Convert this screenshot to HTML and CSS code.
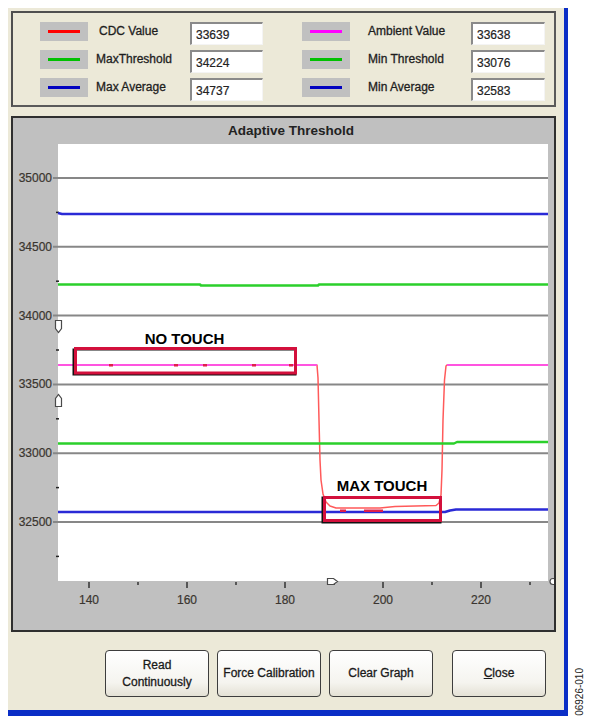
FILE: index.html
```html
<!DOCTYPE html>
<html lang="en">
<head>
<meta charset="utf-8">
<title>Adaptive Threshold</title>
<link rel="stylesheet" href="styles.css">
</head>
<body>
<div class="page">
  <div class="window">
    <section class="legend">
      <div class="legend-col legend-col--left">
        <span class="swatch"><i class="swatch-line red"></i></span><span class="lbl lbl--indent">CDC Value</span><span class="field">33639</span>
        <span class="swatch"><i class="swatch-line green"></i></span><span class="lbl">MaxThreshold</span><span class="field">34224</span>
        <span class="swatch"><i class="swatch-line blue"></i></span><span class="lbl">Max Average</span><span class="field">34737</span>
      </div>
      <div class="legend-col legend-col--right">
        <span class="swatch"><i class="swatch-line magenta"></i></span><span class="lbl">Ambient Value</span><span class="field">33638</span>
        <span class="swatch"><i class="swatch-line green"></i></span><span class="lbl">Min Threshold</span><span class="field">33076</span>
        <span class="swatch"><i class="swatch-line blue"></i></span><span class="lbl">Min Average</span><span class="field">32583</span>
      </div>
    </section>

    <section class="graph">
      <div class="graph-title">Adaptive Threshold</div>
      <svg class="plot" width="541" height="486" viewBox="13 144 541 486">
        <rect x="58" y="144" width="490" height="437" fill="#fff"/>

        <!-- horizontal grid, one line per 500 counts -->
        <g stroke="#878787" stroke-width="2">
          <line x1="53" y1="178" x2="548" y2="178"/>
          <line x1="53" y1="246.8" x2="548" y2="246.8"/>
          <line x1="53" y1="315.6" x2="548" y2="315.6"/>
          <line x1="53" y1="384.4" x2="548" y2="384.4"/>
          <line x1="53" y1="453.2" x2="548" y2="453.2"/>
          <line x1="53" y1="522" x2="548" y2="522"/>
        </g>
        <g stroke="#222" stroke-width="1.5">
          <line x1="56" y1="212.4" x2="59" y2="212.4"/>
          <line x1="56" y1="281.2" x2="59" y2="281.2"/>
          <line x1="56" y1="350" x2="59" y2="350"/>
          <line x1="56" y1="418.8" x2="59" y2="418.8"/>
          <line x1="56" y1="487.6" x2="59" y2="487.6"/>
          <line x1="56" y1="556.4" x2="59" y2="556.4"/>
        </g>
        <g class="axis-text" text-anchor="end">
          <text x="52" y="182">35000</text>
          <text x="52" y="251">34500</text>
          <text x="52" y="320">34000</text>
          <text x="52" y="388">33500</text>
          <text x="52" y="457">33000</text>
          <text x="52" y="526">32500</text>
        </g>

        <!-- x axis ticks and labels -->
        <g stroke="#333" stroke-width="1.5">
          <line x1="89" y1="582" x2="89" y2="588"/>
          <line x1="187" y1="582" x2="187" y2="588"/>
          <line x1="285" y1="582" x2="285" y2="588"/>
          <line x1="383" y1="582" x2="383" y2="588"/>
          <line x1="481" y1="582" x2="481" y2="588"/>
          <line x1="138" y1="582" x2="138" y2="585"/>
          <line x1="236" y1="582" x2="236" y2="585"/>
          <line x1="334" y1="582" x2="334" y2="585"/>
          <line x1="432" y1="582" x2="432" y2="585"/>
          <line x1="530" y1="582" x2="530" y2="585"/>
        </g>
        <g class="axis-text" text-anchor="middle">
          <text x="89" y="604">140</text>
          <text x="187" y="604">160</text>
          <text x="285" y="604">180</text>
          <text x="383" y="604">200</text>
          <text x="481" y="604">220</text>
        </g>

        <!-- traces -->
        <g fill="none" stroke-linejoin="round">
          <polyline stroke="#2a2ad6" stroke-width="2.5" points="58,213 62,214 548,214"/>
          <polyline stroke="#2bd02b" stroke-width="2.5" points="58,284.5 200,284.5 201,285.5 318,285.5 319,284.5 548,284.5"/>
          <polyline stroke="#ff5a5a" stroke-width="1.5" points="58,365 317,365 318,378 319,420 320,460 321,480 323,494 326,502 330,506 336,508 380,508 395,506.5 436,505.5 439,503 441,495 442,470 443,420 444.5,380 446,366 447,365 548,365"/>
          <polyline stroke="#ff44ff" stroke-width="1.5" points="58,365 317,365"/>
          <polyline stroke="#ff44ff" stroke-width="1.5" points="447,365 548,365"/>
          <polyline stroke="#2bd02b" stroke-width="2.5" points="58,443.5 454,443.5 457,442 548,442"/>
          <polyline stroke="#2a2ad6" stroke-width="2.5" points="58,512 445,512 450,510.5 456,509.5 548,509.5"/>
        </g>
        <g fill="#e0204a">
          <rect x="109" y="364" width="4" height="2.5"/>
          <rect x="174" y="364" width="4" height="2.5"/>
          <rect x="203" y="364" width="4" height="2.5"/>
          <rect x="252" y="364" width="4" height="2.5"/>
          <rect x="289" y="364" width="4" height="2.5"/>
          <rect x="340" y="509.5" width="6" height="2.5"/>
          <rect x="364" y="509.5" width="19" height="2.5"/>
        </g>

        <!-- cursor handles -->
        <g fill="#fff" stroke="#4a4a4a" stroke-width="1.2">
          <path d="M55.5 320.5 h6 v8 l-3 4 l-3 -4 z"/>
          <path d="M55.5 406.5 h6 v-8 l-3 -4 l-3 4 z"/>
          <path d="M327.5 578.5 v6 h6 l4 -3 l-4 -3 z"/>
          <circle cx="553" cy="581.5" r="3"/>
        </g>

        <!-- annotations -->
        <g fill="none">
          <rect x="73.5" y="349.5" width="222" height="25" stroke="#111" stroke-width="2"/>
          <rect x="75.5" y="348.5" width="220" height="24.5" stroke="#d3103c" stroke-width="3"/>
          <rect x="322.5" y="497.5" width="118" height="25" stroke="#111" stroke-width="2"/>
          <rect x="324.5" y="497.5" width="116" height="23" stroke="#d3103c" stroke-width="3"/>
        </g>
        <g class="note-text" text-anchor="middle">
          <text x="184.5" y="344">NO TOUCH</text>
          <text x="382" y="491">MAX TOUCH</text>
        </g>
      </svg>
    </section>

    <div class="actions">
      <button class="btn" type="button">Read<br>Continuously</button>
      <button class="btn" type="button">Force Calibration</button>
      <button class="btn" type="button">Clear Graph</button>
      <button class="btn btn--close" type="button"><u>C</u>lose</button>
    </div>
  </div>
  <div class="fig-id">06926-010</div>
</div>
</body>
</html>
```

FILE: styles.css
```css
html, body {
  margin: 0;
  background: #fff;
}

body {
  font-family: "Liberation Sans", Arial, sans-serif;
  color: #1c1c1c;
}

.page {
  display: flex;
  align-items: flex-end;
  padding: 8px 0 0 8px;
}

/* dialog body with its blue frame on the right and bottom */
.window {
  box-sizing: border-box;
  width: 560px;
  height: 708px;
  padding: 3px 8px 0 3px;
  background: #ece9d8;
  border-right: 4px solid #0b2ec6;
  border-bottom: 6px solid #0b2ec6;
  display: flex;
  flex-direction: column;
}

/* legend group */
.legend {
  box-sizing: border-box;
  height: 96px;
  border: 2px solid #4f4f4f;
  border-right-color: #5a5a5a;
  border-bottom-color: #5a5a5a;
  padding: 9px 9px 4px 27px;
  display: flex;
  gap: 39px;
}

.legend-col {
  display: grid;
  grid-auto-rows: 23px;
  row-gap: 5px;
}

.legend-col--left {
  grid-template-columns: 48px 102px 73px;
}

.legend-col--right {
  grid-template-columns: 48px 121px 74px;
}

.swatch {
  height: 19px;
  background: #c0c0c0;
  display: flex;
  align-items: center;
  justify-content: center;
}

.swatch-line {
  display: block;
  width: 32px;
  height: 3px;
}

.swatch-line.red { background: #ff0000; }
.swatch-line.green { background: #00c000; }
.swatch-line.blue { background: #0000c0; }
.swatch-line.magenta { background: #ff00ff; }

.lbl {
  font-size: 12px;
  line-height: 18px;
  padding-left: 8px;
  color: #1e1e1e;
  -webkit-text-stroke: 0.3px #1e1e1e;
}

.lbl--indent {
  padding-left: 11px;
}

.legend-col--right .lbl {
  padding-left: 18px;
}

.field {
  box-sizing: border-box;
  height: 23px;
  background: #fff;
  border-style: solid;
  border-width: 2px 1px 1px 2px;
  border-color: #8a8a8a #f4f4f4 #f4f4f4 #8a8a8a;
  padding: 2px 0 0 4px;
  font-size: 12px;
  line-height: 18px;
  color: #222;
  -webkit-text-stroke: 0.2px #222;
}

/* chart group */
.graph {
  box-sizing: border-box;
  height: 516px;
  margin-top: 9px;
  border: 2px solid #2f2f2f;
  background: #c0c0c0;
  display: flex;
  flex-direction: column;
}

.graph-title {
  height: 26px;
  line-height: 26px;
  padding-left: 15px;
  text-align: center;
  font-size: 13.5px;
  font-weight: bold;
  color: #222;
}

.plot {
  display: block;
}

.axis-text {
  font-family: "Liberation Sans", Arial, sans-serif;
  font-size: 12px;
  fill: #3a352f;
  stroke: #3a352f;
  stroke-width: 0.2px;
}

.note-text {
  font-family: "Liberation Sans", Arial, sans-serif;
  font-size: 15px;
  font-weight: bold;
  fill: #000;
}

/* button row */
.actions {
  display: flex;
  gap: 8px;
  margin-top: 18px;
  padding-left: 94px;
}

.btn {
  box-sizing: border-box;
  width: 104px;
  height: 47px;
  padding: 0;
  border: 1px solid #3d3d3d;
  border-radius: 4px;
  background: linear-gradient(#ffffff, #f5f4ef 70%, #e4e1d5);
  font-family: "Liberation Sans", Arial, sans-serif;
  font-size: 12px;
  line-height: 17px;
  color: #1a1a1a;
  -webkit-text-stroke: 0.3px #1a1a1a;
}

.btn--close {
  width: 94px;
  margin-left: 11px;
}

/* figure number printed along the right margin */
.fig-id {
  writing-mode: vertical-rl;
  transform: rotate(180deg);
  margin-left: 7px;
  font-size: 10px;
  line-height: 10px;
  color: #222;
}
```
